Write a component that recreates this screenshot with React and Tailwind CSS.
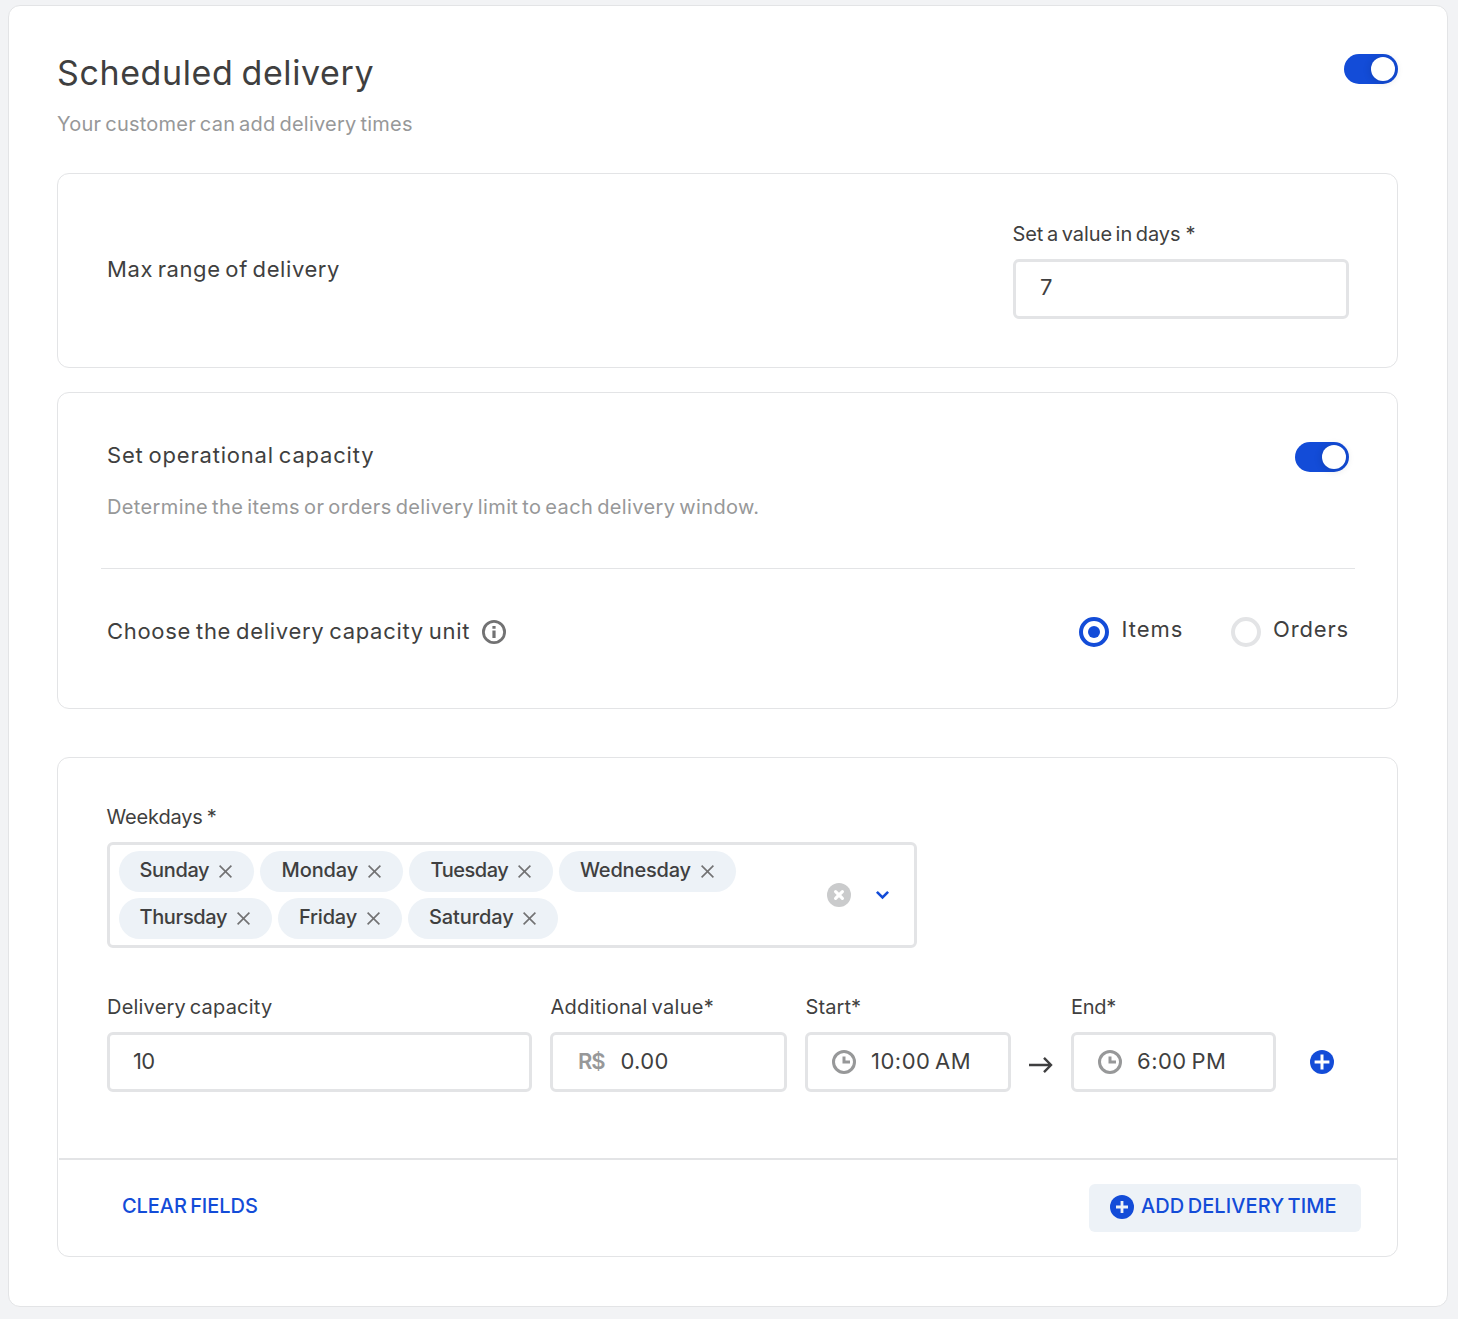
import React from "react";

const weekdays = [
  { name: "Sunday", box: "w-[135px] pl-[20.5px]", text: "tracking-[-0.36px]" },
  { name: "Monday", box: "w-[143px] pl-[21.5px]", text: "tracking-[-0.1px]" },
  { name: "Tuesday", box: "w-[144px] pl-[21.5px]", text: "tracking-[-0.45px]" },
  { name: "Wednesday", box: "w-[177px] pl-[21px]", text: "tracking-[-0.2px]" },
  { name: "Thursday", box: "w-[153px] pl-[20.5px]", text: "tracking-[-0.36px]" },
  { name: "Friday", box: "w-[124px] pl-[21px]", text: "tracking-[-0.2px]" },
  { name: "Saturday", box: "w-[150px] pl-[21px]", text: "tracking-[-0.1px]" },
];

function Toggle({ className = "" }) {
  return (
    <button
      type="button"
      role="switch"
      aria-checked="true"
      className={"flex h-[30px] w-[54px] shrink-0 items-center justify-end rounded-full bg-[#134cd8] pr-[3px] " + className}
    >
      <span className="size-6 rounded-full bg-white shadow-[0_1px_9px_rgba(0,0,0,0.16)]" />
    </button>
  );
}

function Radio({ checked, children, text }) {
  return (
    <label className="flex h-[30px] items-center gap-3">
      <span
        className={
          "flex size-[30px] shrink-0 items-center justify-center rounded-full border-4 " +
          (checked ? "border-[#134cd8]" : "border-[#e3e4e6]")
        }
      >
        {checked && <span className="size-3 rounded-full bg-[#134cd8]" />}
      </span>
      <span className={"pb-[6px] text-[22px] leading-[26px] whitespace-nowrap " + text}>{children}</span>
    </label>
  );
}

function Field({ label, labelClass = "", className = "", children }) {
  return (
    <div className={className}>
      <div className={"text-[20px] leading-[22px] whitespace-nowrap " + labelClass}>{label}</div>
      <div className="mt-[14px] flex h-[60px] items-center rounded-md border-3 border-[#e3e4e6] pb-[2px] text-[22px] leading-[26px] whitespace-nowrap">
        {children}
      </div>
    </div>
  );
}

function CloseIcon() {
  return (
    <svg className="mb-px size-[13px]" viewBox="0 0 13 13" fill="none" stroke="#727273" strokeWidth="1.6">
      <path d="M0.6 0.6 12.4 12.4M12.4 0.6 0.6 12.4" />
    </svg>
  );
}

function ClockIcon() {
  return (
    <svg className="relative top-px ml-6 size-6 shrink-0" viewBox="0 0 24 24" fill="none" stroke="#979899" strokeWidth="3">
      <circle cx="12" cy="12" r="10.5" />
      <path d="M12 6.4V12.1H18" />
    </svg>
  );
}

function PlusIcon({ large }) {
  return (
    <svg className="size-6 shrink-0" viewBox="0 0 24 24" fill="none">
      <circle cx="12" cy="12" r="12" fill="#134cd8" />
      {large ? (
        <path d="M12 4.6V19.4M4.6 12H19.4" stroke="#fff" strokeWidth="3" />
      ) : (
        <path d="M12 6V18M6 12H18" stroke="#edf2f7" strokeWidth="2.8" />
      )}
    </svg>
  );
}

export default function App() {
  return (
    <div className="h-[1319px] w-[1458px] bg-[#f2f3f5] pt-[5px] pl-2 font-['Inter',sans-serif] [word-spacing:-2px] text-[#3f3f40]">
      <main className="h-[1302px] w-[1440px] rounded-xl border border-[#e3e4e6] bg-white px-12 pt-[46px]">
        <header className="flex h-[84px] w-[1341px] justify-between">
          <div>
            <h1 className="text-[34px] leading-[42px] tracking-[0.6px]">Scheduled delivery</h1>
            <p className="mt-[18px] text-[20px] leading-6 tracking-[0.24px] text-[#979899]">
              Your customer can add delivery times
            </p>
          </div>
          <Toggle className="mt-[2px]" />
        </header>

        <section className="mt-[37px] flex h-[195px] w-[1341px] items-center justify-between rounded-xl border border-[#e3e4e6] pr-12 pl-[49px]">
          <h2 className="pb-[3px] text-[22px] leading-[26px] tracking-[0.58px]">Max range of delivery</h2>
          <div className="w-[336px]">
            <div className="-ml-[0.5px] text-[20px] leading-6 tracking-[-0.06px]">
              Set a value in days <span className="ml-[1.5px]">*</span>
            </div>
            <div className="mt-[13px] flex h-[60px] items-center rounded-md border-3 border-[#e3e4e6] pb-1 pl-[24px] text-[22px] leading-[26px]">
              7
            </div>
          </div>
        </section>

        <section className="mt-6 h-[317px] w-[1341px] rounded-xl border border-[#e3e4e6] pt-[49px] pr-[42px] pl-[43px]">
          <div className="flex justify-between px-[6px]">
            <div>
              <h2 className="text-[22px] leading-[26px] tracking-[0.8px]">Set operational capacity</h2>
              <p className="mt-[27px] text-[20px] leading-6 tracking-[0.37px] text-[#979899]">
                Determine the items or orders delivery limit to each delivery window.
              </p>
            </div>
            <Toggle />
          </div>
          <hr className="mt-[49px] border-[#e3e4e6]" />
          <div className="mt-12 flex h-[30px] items-center justify-between px-[6px]">
            <div className="flex items-center">
              <h2 className="w-[375px] pb-[2px] text-[22px] leading-[26px] tracking-[0.7px]">
                Choose the delivery capacity unit
              </h2>
              <svg className="size-6" viewBox="0 0 24 24" fill="none">
                <circle cx="12" cy="12" r="10.6" stroke="#727273" strokeWidth="2.8" />
                <path d="M10.4 6.1H13.6V8.7H10.4ZM10.4 10.6H13.6V18H10.4Z" fill="#727273" />
              </svg>
            </div>
            <div className="flex w-[270px] justify-between">
              <Radio checked text="pl-[0.5px] tracking-[1px]">Items</Radio>
              <div className="w-[118px]">
                <Radio text="tracking-[0.85px]">Orders</Radio>
              </div>
            </div>
          </div>
        </section>

        <section className="mt-12 flex h-[500px] w-[1341px] flex-col rounded-xl border border-[#e3e4e6] pt-12">
          <div className="ml-[48.5px] text-[20px] leading-[22px] tracking-[-0.16px]">
            Weekdays <span className="ml-[0.5px]">*</span>
          </div>
          <div className="mt-[14px] ml-[49px] flex h-[106px] w-[810px] items-center justify-between rounded-md border-3 border-[#e3e4e6] pr-[24px] pl-[9px]">
            <div className="flex w-[640px] flex-wrap gap-[6px]">
              {weekdays.map((day) => (
                <div
                  key={day.name}
                  className={"flex h-[41px] items-center justify-between rounded-full bg-[#edf2f7] pr-[22px] " + day.box}
                >
                  <span className={"pb-[3px] text-[20px] leading-6 font-medium " + day.text}>{day.name}</span>
                  <CloseIcon />
                </div>
              ))}
            </div>
            <div className="flex items-center gap-6">
              <svg className="size-6" viewBox="0 0 24 24" fill="none">
                <circle cx="12" cy="12" r="12" fill="#cacbcc" />
                <path d="M8.6 8.6 15.4 15.4M15.4 8.6 8.6 15.4" stroke="#fff" strokeWidth="3.2" strokeLinecap="round" />
              </svg>
              <svg className="mb-[2px] size-[15px]" viewBox="0 0 15 15" fill="none" stroke="#134cd8" strokeWidth="2.6">
                <path d="M1.9 4.9 7.5 10.5 13.1 4.9" />
              </svg>
            </div>
          </div>

          <div className="mt-12 ml-[49px] flex items-end">
            <Field label="Delivery capacity" labelClass="tracking-[0.2px]" className="w-[425px]">
              <span className="ml-[23px] tracking-[-0.6px]">10</span>
            </Field>
            <Field label="Additional value*" labelClass="pl-[0.5px] tracking-[0.28px]" className="ml-[18px] w-[237px]">
              <span className="ml-[25px] w-[42.5px] font-semibold tracking-[-1.2px] text-[#979899]">R$</span>
              <span className="tracking-[0.3px]">0.00</span>
            </Field>
            <Field label="Start*" labelClass="pl-[0.5px] tracking-[0.1px]" className="ml-[18px] w-[206px]">
              <ClockIcon />
              <span className="ml-[15px] tracking-[0.5px]">10:00 AM</span>
            </Field>
            <svg className="mb-[15px] ml-[18px] h-6 w-6 shrink-0" viewBox="0 0 24 24" fill="none" stroke="#3f3f40" strokeWidth="2.4">
              <path d="M0 12H21.5M15 4.8 22 12 15 19.2" />
            </svg>
            <Field label="End*" labelClass="tracking-[-0.3px]" className="ml-[18px] w-[205px]">
              <ClockIcon />
              <span className="ml-[15px] tracking-[0.5px]">6:00 PM</span>
            </Field>
            <button type="button" className="mb-[18px] ml-[34px]" aria-label="Add">
              <PlusIcon large />
            </button>
          </div>

          <footer className="mt-[66px] ml-px flex flex-1 items-center justify-between border-t-2 border-[#e3e4e6] pr-9 pl-[63px] text-[20px] leading-6 font-medium text-[#134cd8]">
            <button type="button" className="pb-1 tracking-[-0.06px] [word-spacing:-2px]">CLEAR FIELDS</button>
            <button type="button" className="flex h-12 w-[272px] items-center rounded-md bg-[#edf2f7] pl-[21px] [word-spacing:-2px]">
              <span className="-mt-[2px]">
                <PlusIcon />
              </span>
              <span className="ml-[7px] pb-1 tracking-[0.08px] whitespace-nowrap">ADD DELIVERY TIME</span>
            </button>
          </footer>
        </section>
      </main>
    </div>
  );
}
